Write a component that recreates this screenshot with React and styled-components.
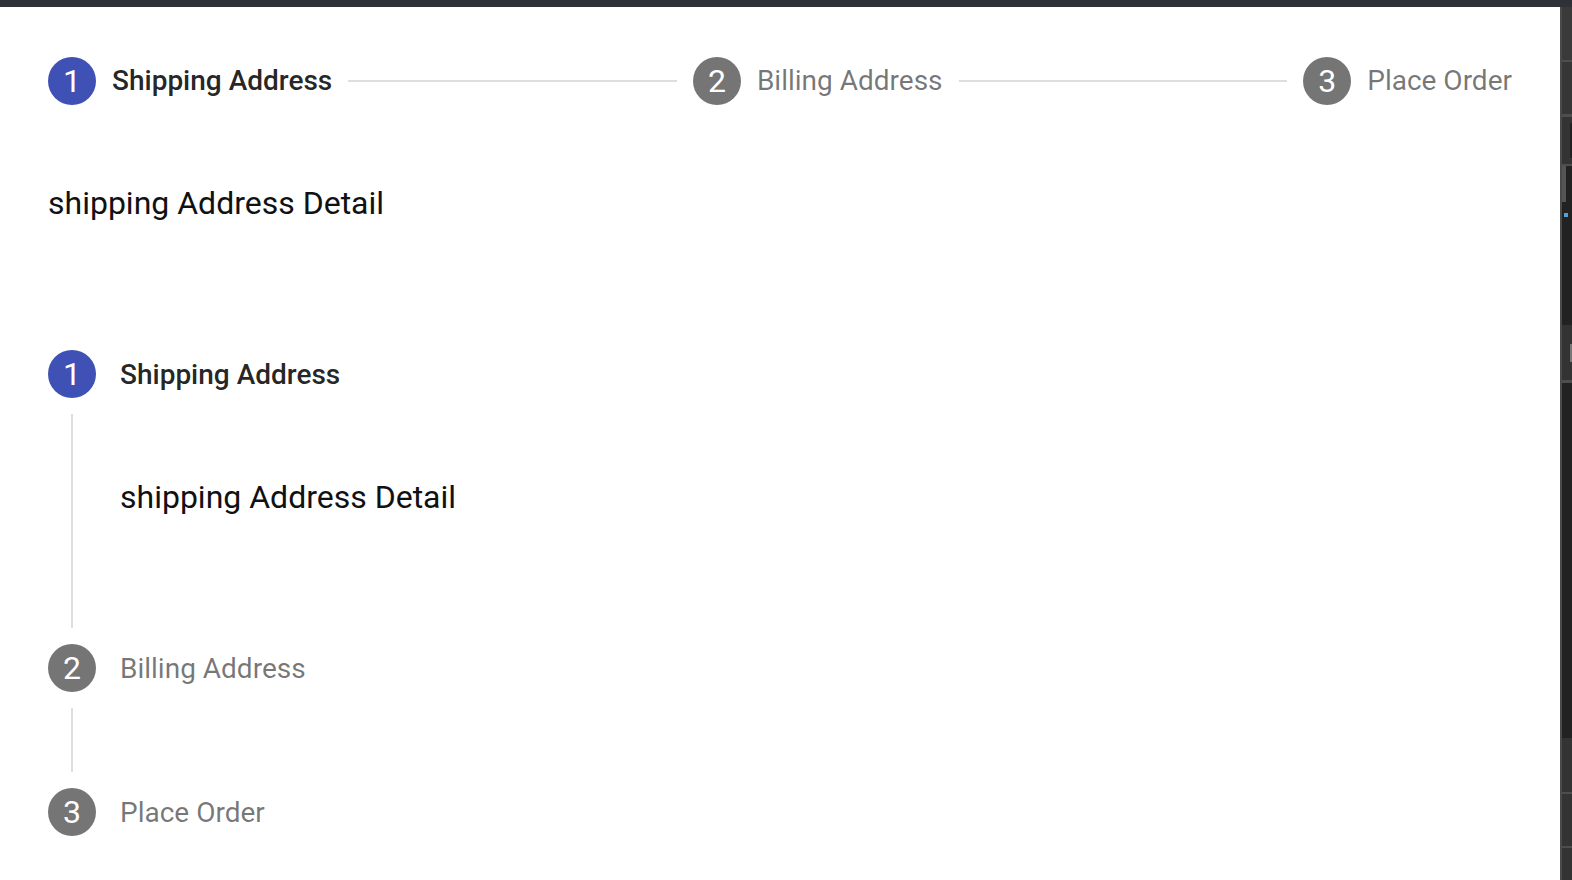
import React from "react";
import styled, { createGlobalStyle } from "styled-components";

const GlobalStyle = createGlobalStyle`
  html, body { margin: 0; padding: 0; background: #ffffff; }
  body { font-family: Roboto, "Noto Sans", sans-serif; overflow: hidden; }
`;

const Frame = styled.div`
  display: flex;
  flex-direction: column;
  width: 1572px;
  height: 880px;
  overflow: hidden;
`;

const TopBar = styled.div`
  height: 7px;
  flex: none;
  background: #303136;
`;

const Body = styled.div`
  display: flex;
  flex: 1;
  min-height: 0;
`;

const Main = styled.main`
  flex: 1;
  background: #ffffff;
  overflow: hidden;
`;

const Strip = styled.aside`
  width: 10px;
  flex: none;
  border-left: 2px solid #4a4a4a;
  display: flex;
  flex-direction: column;
  background: #222222;
`;

const Segment = styled.div`
  height: ${(p) => p.$h}px;
  flex: none;
  background: ${(p) => p.$bg};
  border-bottom: ${(p) => (p.$line ? `${p.$line}px solid #4e4e4e` : "none")};
  display: flex;
  justify-content: ${(p) => p.$align || "flex-end"};
  align-items: ${(p) => p.$valign || "center"};
`;

const Nub = styled.div`
  width: ${(p) => p.$w}px;
  height: ${(p) => p.$h}px;
  background: ${(p) => p.$bg};
  margin-top: ${(p) => p.$mt || 0}px;
  margin-left: ${(p) => p.$ml || 0}px;
`;

const HStepper = styled.div`
  display: flex;
  align-items: center;
  padding: 50px 48px 48px;
`;

const HStep = styled.div`
  display: flex;
  align-items: center;
  padding: 0 16px;
  &:first-child { padding-left: 0; }
  &:last-child { padding-right: 0; }
`;

const Circle = styled.div`
  width: 48px;
  height: 48px;
  flex: none;
  border-radius: 50%;
  background: ${(p) => (p.$active ? "#3f51b5" : "#757575")};
  color: #ffffff;
  font-size: 32px;
  line-height: 48px;
  text-align: center;
`;

const Label = styled.span`
  font-size: 28px;
  line-height: 40px;
  font-weight: ${(p) => (p.$active ? 500 : 400)};
  color: ${(p) => (p.$active ? "rgba(0,0,0,0.87)" : "rgba(0,0,0,0.54)")};
  margin-left: ${(p) => p.$gap}px;
  padding-top: ${(p) => p.$nudge || 0}px;
  white-space: nowrap;
`;

const HConnector = styled.div`
  flex: 1;
  border-top: 2px solid #dedede;
`;

const Detail = styled.div`
  font-size: 32px;
  line-height: 48px;
  color: #111111;
  margin: ${(p) => p.$m};
`;

const VStepper = styled.div`
  display: flex;
  flex-direction: column;
  padding: 48px;
`;

const VLabelRow = styled.div`
  display: flex;
  align-items: center;
  padding: 16px 0;
`;

const VContent = styled.div`
  margin-left: 23px;
  border-left: 2px solid #dedede;
  padding-left: 47px;
  height: 214px;
  box-sizing: border-box;
  padding-top: 59px;
`;

const VConnector = styled.div`
  margin-left: 23px;
  border-left: 2px solid #dedede;
  height: 64px;
`;

const steps = ["Shipping Address", "Billing Address", "Place Order"];

export default function App() {
  return (
    <>
      <GlobalStyle />
      <Frame>
        <TopBar />
        <Body>
          <Main>
            <HStepper>
              {steps.map((s, i) => (
                <React.Fragment key={s}>
                  {i > 0 && <HConnector />}
                  <HStep>
                    <Circle $active={i === 0}>{i + 1}</Circle>
                    <Label $active={i === 0} $gap={16}>{s}</Label>
                  </HStep>
                </React.Fragment>
              ))}
            </HStepper>
            <Detail $m="26px 48px 59px">shipping Address Detail</Detail>
            <VStepper>
              <VLabelRow>
                <Circle $active>1</Circle>
                <Label $active $gap={24} $nudge={2}>Shipping Address</Label>
              </VLabelRow>
              <VContent>
                <Detail $m="0">shipping Address Detail</Detail>
              </VContent>
              <VLabelRow>
                <Circle>2</Circle>
                <Label $gap={24} $nudge={2}>Billing Address</Label>
              </VLabelRow>
              <VConnector />
              <VLabelRow>
                <Circle>3</Circle>
                <Label $gap={24} $nudge={2}>Place Order</Label>
              </VLabelRow>
            </VStepper>
          </Main>
          <Strip>
            <Segment $h={53} $bg="#3a3a3a" $line={2} />
            <Segment $h={52} $bg="#363636" $line={3} />
            <Segment $h={47} $bg="#333333" $line={2}>
              <Nub $w={2} $h={35} $bg="#222222" />
            </Segment>
            <Segment $h={47} $bg="#222222" $align="flex-start" $valign="flex-start">
              <Nub $w={4} $h={36} $bg="#555555" />
            </Segment>
            <Segment $h={12} $bg="#222222" $align="flex-start" $valign="flex-start">
              <Nub $w={4} $h={4} $bg="#4fa3d8" $ml={2} $mt={0} />
            </Segment>
            <Segment $h={100} $bg="#222222" />
            <Segment $h={55} $bg="#333333" $line={3}>
              <Nub $w={2} $h={18} $bg="#777777" />
            </Segment>
            <Segment $h={355} $bg="#222222" />
            <Segment $h={54} $bg="#333333" $line={2} />
            <Segment $h={52} $bg="#333333" $line={2} />
            <Segment $h={40} $bg="#333333" />
          </Strip>
        </Body>
      </Frame>
    </>
  );
}
